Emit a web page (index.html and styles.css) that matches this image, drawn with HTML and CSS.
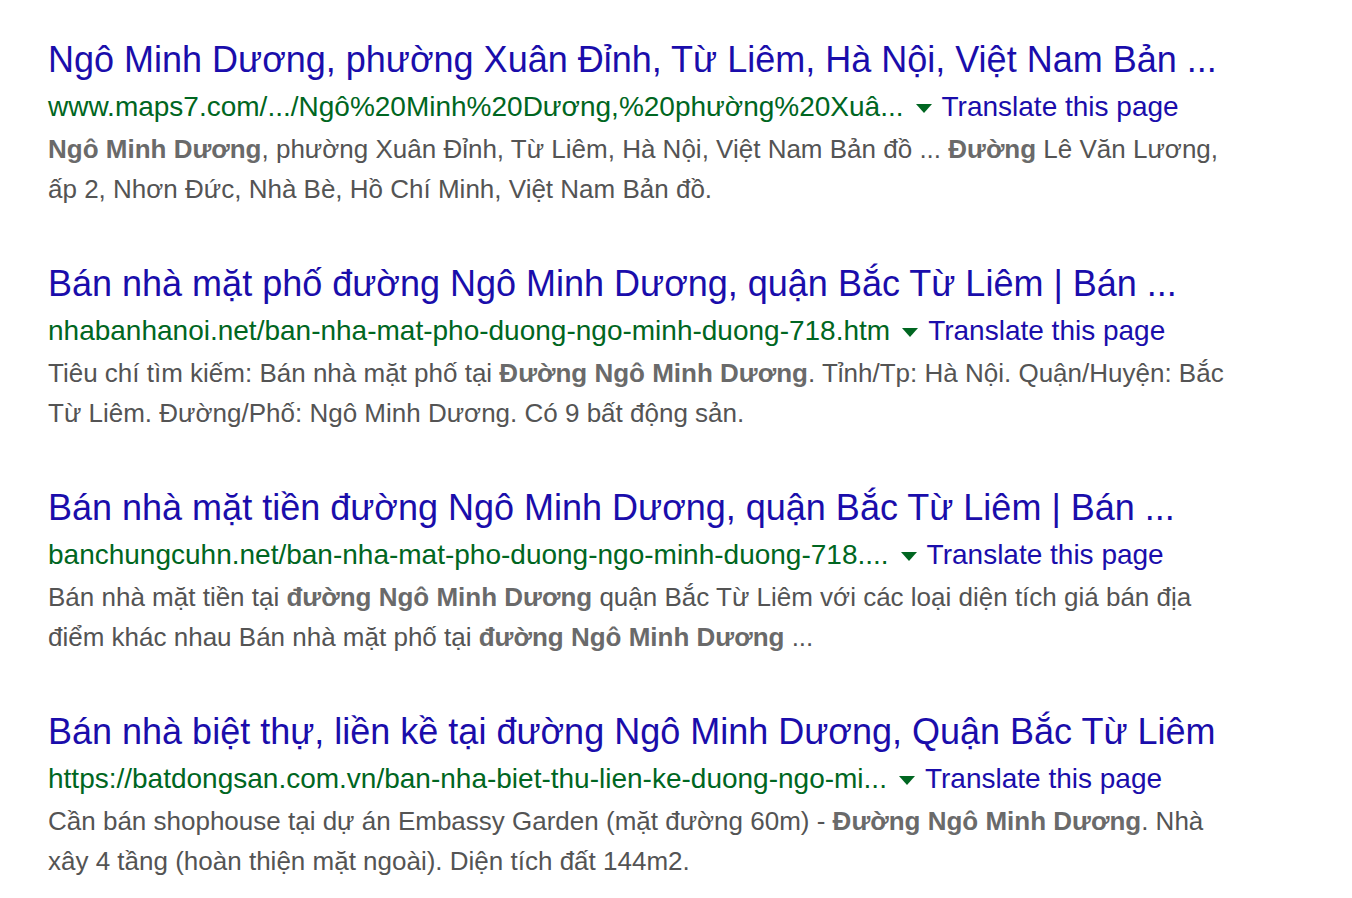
FILE: index.html
```html
<!DOCTYPE html>
<html lang="vi">
<head>
<meta charset="utf-8">
<link rel="stylesheet" href="styles.css">
</head>
<body>
<div class="results">
  <div class="result">
    <h3 class="title"><a href="#">Ngô Minh Dương, phường Xuân Đỉnh, Từ Liêm, Hà Nội, Việt Nam Bản ...</a></h3>
    <div class="urlrow"><cite class="url">www.maps7.com/.../Ngô%20Minh%20Dương,%20phường%20Xuâ...</cite><span class="arrow"></span><a class="translate" href="#">Translate this page</a></div>
    <p class="snippet"><b>Ngô Minh Dương</b>, phường Xuân Đỉnh, Từ Liêm, Hà Nội, Việt Nam Bản đồ ... <b>Đường</b> Lê Văn Lương, ấp 2, Nhơn Đức, Nhà Bè, Hồ Chí Minh, Việt Nam Bản đồ.</p>
  </div>
  <div class="result">
    <h3 class="title"><a href="#">Bán nhà mặt phố đường Ngô Minh Dương, quận Bắc Từ Liêm | Bán ...</a></h3>
    <div class="urlrow"><cite class="url">nhabanhanoi.net/ban-nha-mat-pho-duong-ngo-minh-duong-718.htm</cite><span class="arrow"></span><a class="translate" href="#">Translate this page</a></div>
    <p class="snippet">Tiêu chí tìm kiếm: Bán nhà mặt phố tại <b>Đường Ngô Minh Dương</b>. Tỉnh/Tp: Hà Nội. Quận/Huyện: Bắc Từ Liêm. Đường/Phố: Ngô Minh Dương. Có 9 bất động sản.</p>
  </div>
  <div class="result">
    <h3 class="title"><a href="#">Bán nhà mặt tiền đường Ngô Minh Dương, quận Bắc Từ Liêm | Bán ...</a></h3>
    <div class="urlrow"><cite class="url">banchungcuhn.net/ban-nha-mat-pho-duong-ngo-minh-duong-718....</cite><span class="arrow"></span><a class="translate" href="#">Translate this page</a></div>
    <p class="snippet">Bán nhà mặt tiền tại <b>đường Ngô Minh Dương</b> quận Bắc Từ Liêm với các loại diện tích giá bán địa điểm khác nhau Bán nhà mặt phố tại <b>đường Ngô Minh Dương</b> ...</p>
  </div>
  <div class="result">
    <h3 class="title"><a href="#">Bán nhà biệt thự, liền kề tại đường Ngô Minh Dương, Quận Bắc Từ Liêm</a></h3>
    <div class="urlrow"><cite class="url">https://batdongsan.com.vn/ban-nha-biet-thu-lien-ke-duong-ngo-mi...</cite><span class="arrow"></span><a class="translate" href="#">Translate this page</a></div>
    <p class="snippet">Cần bán shophouse tại dự án Embassy Garden (mặt đường 60m) - <b>Đường Ngô Minh Dương</b>. Nhà xây 4 tầng (hoàn thiện mặt ngoài). Diện tích đất 144m2.</p>
  </div>
</div>
</body>
</html>
```
FILE: styles.css
```css
html, body {
  margin: 0;
  padding: 0;
  background: #fff;
}
body {
  font-family: "Liberation Sans", Arial, sans-serif;
}
.results {
  padding: 38px 0 0 48px;
  width: 1190px;
}
.result {
  margin-bottom: 53px;
}
.title {
  margin: 0;
  font-size: 36px;
  font-weight: normal;
  line-height: 44px;
  white-space: nowrap;
}
.title a {
  color: #1a0dab;
  text-decoration: none;
}
.urlrow {
  display: flex;
  align-items: center;
  height: 44px;
  padding-top: 3px;
  font-size: 28px;
  white-space: nowrap;
}
.url {
  font-style: normal;
  color: #006621;
}
.arrow {
  width: 0;
  height: 0;
  border-left: 8px solid transparent;
  border-right: 8px solid transparent;
  border-top: 9px solid #006621;
  margin: 2px 10px 0 12px;
}
.translate {
  color: #1a0dab;
  text-decoration: none;
}
.snippet {
  margin: 0;
  font-size: 26px;
  line-height: 40px;
  color: #545454;
}
.snippet b {
  color: #6a6a6a;
}
```
